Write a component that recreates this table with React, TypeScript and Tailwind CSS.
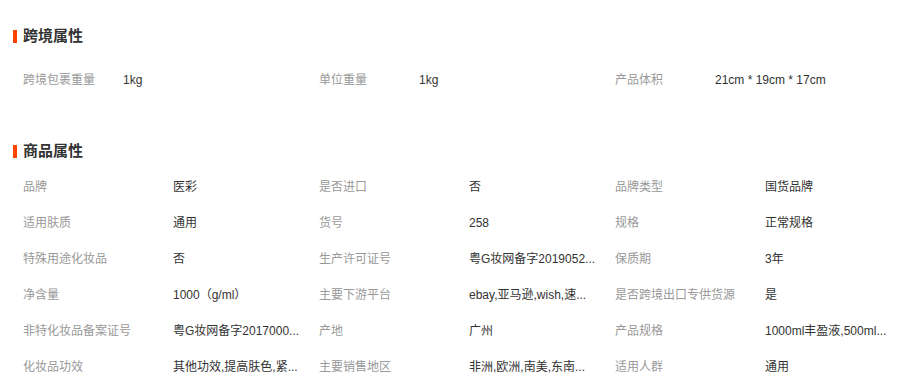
import React from "react";

type Attr = { label: string; value: string };

const crossBorder: Attr[] = [
    { label: "跨境包裹重量", value: "1kg" },
    { label: "单位重量", value: "1kg" },
    { label: "产品体积", value: "21cm * 19cm * 17cm" },
];

const goodsAttrs: Attr[] = [
    { label: "品牌", value: "医彩" },
    { label: "是否进口", value: "否" },
    { label: "品牌类型", value: "国货品牌" },
    { label: "适用肤质", value: "通用" },
    { label: "货号", value: "258" },
    { label: "规格", value: "正常规格" },
    { label: "特殊用途化妆品", value: "否" },
    { label: "生产许可证号", value: "粤G妆网备字2019052..." },
    { label: "保质期", value: "3年" },
    { label: "净含量", value: "1000（g/ml）" },
    { label: "主要下游平台", value: "ebay,亚马逊,wish,速..." },
    { label: "是否跨境出口专供货源", value: "是" },
    { label: "非特化妆品备案证号", value: "粤G妆网备字2017000..." },
    { label: "产地", value: "广州" },
    { label: "产品规格", value: "1000ml丰盈液,500ml..." },
    { label: "化妆品功效", value: "其他功效,提高肤色,紧..." },
    { label: "主要销售地区", value: "非洲,欧洲,南美,东南..." },
    { label: "适用人群", value: "通用" },
];

function SectionTitle({ children }: { children: string }) {
    return (
        <div className="flex items-center h-[20px] pl-[13px]">
            <span className="w-[4px] h-[13px] bg-[#ff4400]" />
            <span className="ml-[6px] text-[15px] font-bold text-[#333]">
                {children}
            </span>
        </div>
    );
}

export default function App() {
    return (
        <div
            className="w-[902px] h-[384px] bg-white overflow-hidden pt-[26px]"
            style={{
                fontFamily:
                    '"Liberation Sans", "Noto Sans CJK SC", sans-serif',
            }}
        >
            <SectionTitle>跨境属性</SectionTitle>
            <div className="grid grid-cols-[296px_296px_296px] pl-[23px] mt-[16px]">
                {crossBorder.map((a) => (
                    <div key={a.label} className="flex items-center h-[36px] text-[12px]">
                        <span className="w-[100px] text-[#999]">{a.label}</span>
                        <span className="text-[#333]">{a.value}</span>
                    </div>
                ))}
            </div>

            <div className="mt-[43px]">
                <SectionTitle>商品属性</SectionTitle>
            </div>
            <div className="grid grid-cols-[296px_296px_296px] pl-[23px] mt-[8px]">
                {goodsAttrs.map((a) => (
                    <div key={a.label} className="flex items-center h-[36px] text-[12px]">
                        <span className="w-[150px] shrink-0 text-[#999] whitespace-nowrap">
                            {a.label}
                        </span>
                        <span className="max-w-[128px] truncate text-[#333]">
                            {a.value}
                        </span>
                    </div>
                ))}
            </div>
        </div>
    );
}
